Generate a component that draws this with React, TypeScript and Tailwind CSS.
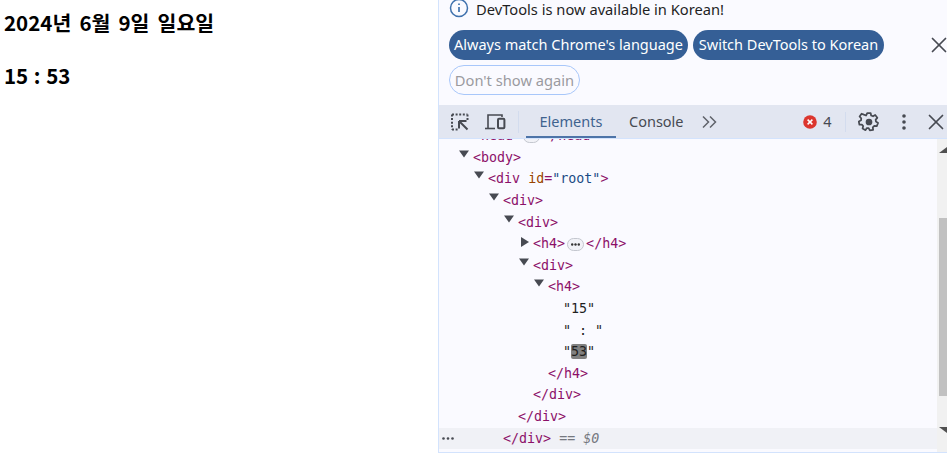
import { X } from "lucide-react";

const MONO = "font-['DejaVu_Sans_Mono',monospace] text-[13.33px]";

function Tag({ children }: { children: React.ReactNode }) {
  return <span className="text-[#8c1068]">{children}</span>;
}

function Arrow({ open }: { open: boolean }) {
  return open ? (
    <svg width="12" height="8" viewBox="0 0 12 8" className="absolute -left-[15px] top-[3px]">
      <path d="M1 0.5h10L6 7.5z" fill="#474a52" />
    </svg>
  ) : (
    <svg width="8" height="10" viewBox="0 0 8 10" className="absolute -left-[12px] top-[4px]">
      <path d="M0 0v10l8-5z" fill="#474a52" />
    </svg>
  );
}

function Row({
  indent,
  arrow,
  children,
}: {
  indent: string;
  arrow?: "open" | "closed";
  children: React.ReactNode;
}) {
  return (
    <div className={`h-[21.6px] leading-[21.6px] whitespace-pre ${indent}`}>
      <span className="relative inline-block">
        {arrow && <Arrow open={arrow === "open"} />}
        {children}
      </span>
    </div>
  );
}

function InspectIcon() {
  return (
    <svg width="20" height="20" viewBox="0 0 20 20" fill="none" stroke="#474a52">
      <path d="M2 2.5h15.5M2 2.5v15M2 17.5h6M17.5 2.5v6" strokeWidth="2" strokeDasharray="2 1.6" />
      <path d="M9 9h7.5M9 9v7.5M9.5 9.5l8 8" strokeWidth="2" />
    </svg>
  );
}

function DeviceIcon() {
  return (
    <svg width="21" height="18" viewBox="0 0 21 18" fill="none" stroke="#474a52" strokeWidth="1.6">
      <path d="M3 15V2h14v2" />
      <path d="M0 15.5h10" />
      <rect x="13" y="5.8" width="6.4" height="9.4" rx="1" strokeWidth="2" />
    </svg>
  );
}

function GearIcon() {
  return (
    <svg width="22" height="22" viewBox="0 0 24 24" fill="none" stroke="#474a52" strokeWidth="2.1" strokeLinejoin="round">
      <path d="M10 2h4l.6 3 2.3 1 2.6-1.6 2.6 3.4-2 2.2.3 2.4 2.6 1.6-1.6 4-3-.4-1.8 1.8.4 3-4 .6-1.4-2.6h-2.4L7.8 22.800l-3.600-2 .8-3-1.600-1.800-3 .2-.8-4 2.800-1.400.2-2.400-2-2.200 2.400-3.400 2.800 1.200L8.400 5z" transform="translate(1.2 .4) scale(.9)" />
      <circle cx="12" cy="12" r="2.6" fill="#474a52" />
    </svg>
  );
}

export default function App() {
  return (
    <div className="flex h-[453px] w-[947px] overflow-hidden bg-white font-['Noto_Sans',sans-serif]">
      {/* page */}
      <div className="w-[438px] shrink-0 px-[4px] pt-[9px] font-['Noto_Sans_CJK_KR',sans-serif] text-[20.5px] font-bold leading-[27px] text-black">
        <h4 className="[word-spacing:3.5px]">2024년 6월 9일 일요일</h4>
        <h4 className="mt-[26px] [word-spacing:1px]">15 : 53</h4>
      </div>

      {/* devtools */}
      <div className="flex w-[509px] shrink-0 flex-col border-l border-[#d3e3fd] bg-[#fafaff]">
        {/* infobar */}
        <div className="h-[105px] shrink-0">
          <div className="flex h-[18px] items-center pl-[10px] text-[14.7px] text-[#1f1f1f]">
            <svg width="20" height="20" viewBox="0 0 20 20" fill="none" className="mr-[7px] shrink-0">
              <circle cx="10" cy="9" r="8.5" stroke="#3f71ad" strokeWidth="1.5" />
              <path d="M10 8v5M10 4.500v1.600" stroke="#3f71ad" strokeWidth="1.7" />
            </svg>
            <span>DevTools is now available in Korean!</span>
          </div>
          <div className="mt-[12px] flex h-[30px] items-center pl-[10px]">
            <span className="flex h-[30px] w-[239px] items-center justify-center rounded-full bg-[#355f96] text-[14.5px] text-white">
              Always match Chrome's language
            </span>
            <span className="ml-[5px] flex h-[30px] w-[191px] items-center justify-center rounded-full bg-[#355f96] text-[14.5px] text-white">
              Switch DevTools to Korean
            </span>
            <X size={26} strokeWidth={1.6} color="#474a52" className="ml-auto mr-[-4.5px]" />
          </div>
          <div className="mt-[5px] pl-[10px]">
            <span className="flex h-[30px] w-[131px] items-center justify-center rounded-full border border-[#a8c7fa] text-[14.7px] text-[#9a9a9f]">
              Don't show again
            </span>
          </div>
        </div>

        {/* toolbar */}
        <div className="flex h-[34px] shrink-0 items-center border-b border-[#d3e3fd] bg-[#e2e6f1] text-[14.5px]">
          <div className="ml-[11px] flex w-[20px] justify-center">
            <InspectIcon />
          </div>
          <div className="ml-[15px] flex w-[21px] justify-center">
            <DeviceIcon />
          </div>
          <div className="ml-[12px] h-[22px] w-px bg-[#d3dcee]" />
          <div className="ml-[7px] flex h-full w-[90px] items-center justify-center border-b-[2px] border-[#4d74a8] pt-[3px] text-[#3f638f]">
            Elements
          </div>
          <span className="ml-[13px] text-[#474a52]">Console</span>
          <svg width="16" height="12" viewBox="0 0 16 12" fill="none" stroke="#60636b" strokeWidth="1.5" className="ml-[18px]">
            <path d="M1 .5 6.500 6 1 11.500M8 .5 13.500 6 8 11.500" />
          </svg>
          <div className="ml-auto flex items-center">
            <svg width="14" height="14" viewBox="0 0 14 14">
              <circle cx="7" cy="7" r="6.800" fill="#dc362e" />
              <path d="M4.600 4.600l4.800 4.800M9.400 4.600l-4.800 4.800" stroke="#fff" strokeWidth="1.500" />
            </svg>
            <span className="ml-[6px] text-[#474a52]">4</span>
            <div className="ml-[13px] h-[20px] w-px bg-[#d3dcee]" />
            <div className="ml-[12px]">
              <GearIcon />
            </div>
            <svg width="4" height="16" viewBox="0 0 4 16" className="ml-[22px]" fill="#474a52">
              <circle cx="2" cy="2" r="1.800" />
              <circle cx="2" cy="8" r="1.800" />
              <circle cx="2" cy="14" r="1.800" />
            </svg>
            <X size={26} strokeWidth={1.6} color="#474a52" className="ml-[17px] mr-[-1.5px]" />
          </div>
        </div>

        {/* elements tree */}
        <div className="flex min-h-0 flex-1 border-b border-[#d3e3fd]">
          <div className={`relative min-w-0 flex-1 overflow-hidden ${MONO} text-[#1f1f1f]`}>
            <div className="-mt-[13.8px]">
              <Row indent="pl-[34px]">
                <Tag>{"<head>"}</Tag>
                <span className="mx-[2px] inline-block h-[13px] w-[17px] rounded-full border border-[#c4c7cf] bg-[#f1f2f7] align-middle" />
                <Tag>{"</head>"}</Tag>
              </Row>
              <Row indent="pl-[34px]" arrow="open"><Tag>{"<body>"}</Tag></Row>
              <Row indent="pl-[49px]" arrow="open">
                <Tag>{"<div "}</Tag>
                <span className="text-[#994500]">id</span>
                <Tag>=</Tag>
                <span className="text-[#1a4a85]">"root"</span>
                <Tag>{">"}</Tag>
              </Row>
              <Row indent="pl-[64px]" arrow="open"><Tag>{"<div>"}</Tag></Row>
              <Row indent="pl-[79px]" arrow="open"><Tag>{"<div>"}</Tag></Row>
              <Row indent="pl-[94px]" arrow="closed">
                <Tag>{"<h4>"}</Tag>
                <span className="mx-[2px] inline-flex h-[13px] w-[17px] items-center justify-center rounded-full border border-[#c4c7cf] bg-[#f1f2f7] align-middle">
                  <svg width="9" height="3" viewBox="0 0 9 3" fill="#333">
                    <circle cx="1.200" cy="1.500" r="1.200" />
                    <circle cx="4.500" cy="1.500" r="1.200" />
                    <circle cx="7.800" cy="1.500" r="1.200" />
                  </svg>
                </span>
                <Tag>{"</h4>"}</Tag>
              </Row>
              <Row indent="pl-[94px]" arrow="open"><Tag>{"<div>"}</Tag></Row>
              <Row indent="pl-[109px]" arrow="open"><Tag>{"<h4>"}</Tag></Row>
              <Row indent="pl-[124px]">"15"</Row>
              <Row indent="pl-[124px]">" : "</Row>
              <Row indent="pl-[124px]">
                "<span className="inline-block h-[15px] rounded-[2px] bg-[#808080] leading-[15px]">53</span>"
              </Row>
              <Row indent="pl-[109px]"><Tag>{"</h4>"}</Tag></Row>
              <Row indent="pl-[94px]"><Tag>{"</div>"}</Tag></Row>
              <Row indent="pl-[79px]"><Tag>{"</div>"}</Tag></Row>
              <div className="relative h-[21.6px] bg-[#f0f1f6] pl-[64px] leading-[21.6px] whitespace-pre">
                <svg width="12" height="3" viewBox="0 0 12 3" fill="#474a52" className="absolute left-[3px] top-[9px]">
                  <circle cx="1.500" cy="1.500" r="1.300" />
                  <circle cx="6" cy="1.500" r="1.300" />
                  <circle cx="10.500" cy="1.500" r="1.300" />
                </svg>
                <Tag>{"</div>"}</Tag>
                <span className="italic text-[#75787f]"> == $0</span>
              </div>
            </div>
          </div>

          {/* scrollbar */}
          <div className="flex w-[10px] shrink-0 flex-col bg-[#f1f1f1] pl-[2px]">
            <svg width="8" height="6" viewBox="0 0 8 6" className="mt-[8px] shrink-0" fill="#505050">
              <path d="M0 6 8 0v6z" />
            </svg>
            <div className="mt-[65px] h-[178px] shrink-0 bg-[#c1c1c1]" />
            <svg width="8" height="6" viewBox="0 0 8 6" className="mt-[31px] shrink-0" fill="#505050">
              <path d="M0 0h8v6z" />
            </svg>
          </div>
        </div>
      </div>
    </div>
  );
}
